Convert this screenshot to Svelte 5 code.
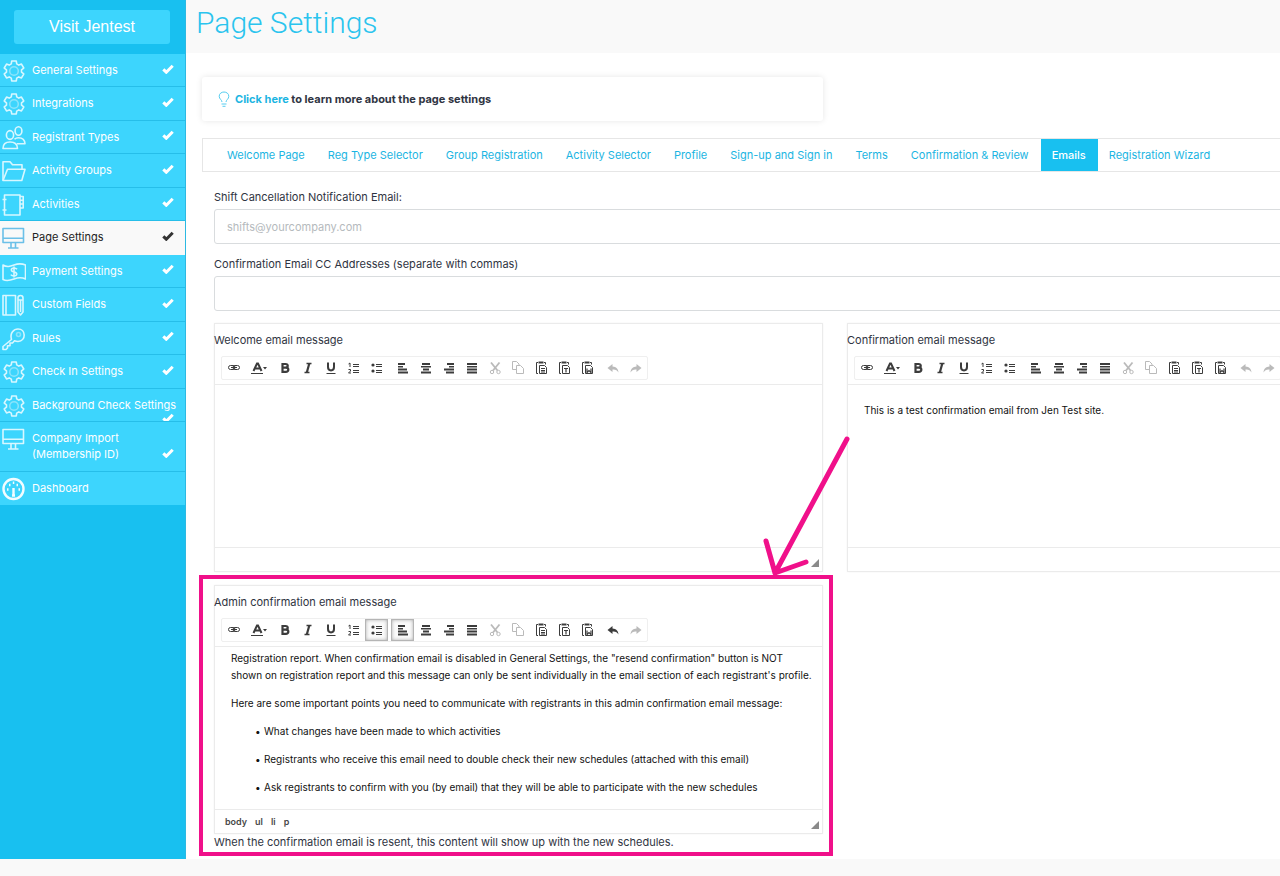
<script>
	const menu = [
		{ label: 'General Settings', icon: 'gear' },
		{ label: 'Integrations', icon: 'gear' },
		{ label: 'Registrant Types', icon: 'users' },
		{ label: 'Activity Groups', icon: 'folder' },
		{ label: 'Activities', icon: 'notebook' },
		{ label: 'Page Settings', icon: 'monitor', active: true },
		{ label: 'Payment Settings', icon: 'money' },
		{ label: 'Custom Fields', icon: 'fields' },
		{ label: 'Rules', icon: 'key' },
		{ label: 'Check In Settings', icon: 'gear' },
		{ label: 'Background Check Settings', icon: 'gear', long: true },
		{ label: 'Company Import (Membership ID)', icon: 'monitor', tall: true },
		{ label: 'Dashboard', icon: 'gauge', unchecked: true }
	];

	const tabs = [
		'Welcome Page',
		'Reg Type Selector',
		'Group Registration',
		'Activity Selector',
		'Profile',
		'Sign-up and Sign in',
		'Terms',
		'Confirmation & Review',
		'Emails',
		'Registration Wizard'
	];
	let tab = $state('Emails');

	const tools = [
		['link', 'color', 'bold', 'italic', 'underline', 'ol', 'ul'],
		['left', 'center', 'right', 'justify', 'cut', 'copy', 'paste', 'pasteText', 'pasteWord'],
		['undo', 'redo']
	];

	// six-toothed outline around 12,12
	function gear() {
		const pts = [];
		for (let k = 0; k < 6; k++) {
			for (const [da, r] of [[-21, 7.6], [-13, 10.2], [13, 10.2], [21, 7.6]]) {
				const a = ((k * 60 - 90 + da) * Math.PI) / 180;
				pts.push(`${(12 + r * Math.cos(a)).toFixed(2)} ${(12 + r * Math.sin(a)).toFixed(2)}`);
			}
		}
		return 'M' + pts.join('L') + 'Z';
	}
	const gearPath = gear();
</script>

{#snippet menuIcon(name)}
	<svg class="icon" viewBox="0 0 24 24" width="24" height="24" aria-hidden="true">
		{#if name === 'gear'}
			<path d={gearPath} />
			<circle class="faint" cx="12" cy="12" r="4.3" />
		{:else if name === 'users'}
			<ellipse cx="8" cy="9" rx="3.6" ry="4.4" />
			<ellipse cx="16.5" cy="5" rx="3.4" ry="4.2" />
			<path d="M1 22.5c0-4.500 2.500-6.500 7-6.500s7.500 2 7.500 6.500Z" />
			<path d="M12.500 13.300c1-1 2.300-1.500 4-1.500 3.700 0 6.200 1.700 6.500 6h-8" />
		{:else if name === 'folder'}
			<path d="M1 21.500V2.800h7l2.500 3h9.500v4.500" />
			<path d="M1 21.500 5.500 10.300h17.500L19.800 21.500Z" />
		{:else if name === 'notebook'}
			<path d="M2.500 2h15.500v20H2.500Z" />
			<path d="M18 3.500h3.200v11.500H18M18 7.300h3.200M18 11h3.200M0.500 6.500h4M0.500 17h4" />
		{:else if name === 'monitor'}
			<path d="M1 2.500h20.500v14H1ZM1 12.300h20.500M9 16.500v5M13.500 16.500v5M6 22h10.500" />
		{:else if name === 'money'}
			<path d="M1 5c4 2.500 7 1.500 11 0s8-1.500 11.500 0v14c-4-2-7.500-1.500-11.500 0s-7 2.500-11 .5Z" />
			<path d="M15 9.200c-.7-1-1.800-1.200-3-1.200-3.500 0-3.500 3.600 0 4s3.800 4 0 4c-1.500 0-2.500-.4-3.200-1.400M12 6.500v11" />
		{:else if name === 'fields'}
			<path d="M1 2.500h12.500v19.500H1ZM4 2.500v19.500M16 5c0-3.300 5-3.300 5 0v14l-2.500 3-2.500-3ZM16 7h5M18.500 7v12" />
		{:else if name === 'key'}
			<path d="M9.500 12.500C7.500 6 12 2 16 2c8 0 8.500 12 0 12.500-1.500 0-2.500-.2-3.500-.7l-2 2.200H8v2.700H5.500V21L4 22.500H1v-3Z" />
			<circle class="faint" cx="16.500" cy="7.500" r="2" />
		{:else}
			<circle class="bold" cx="11.500" cy="12" r="10" />
			<path class="bold" d="M5 12.500h1.500M7 8h1.500M10.800 5.800h1.500M14.500 8h1.500M16.500 12.500h1.500M11.500 11v8M10 18.500h3" />
		{/if}
	</svg>
{/snippet}

{#snippet toolIcon(name)}
	<svg viewBox="0 0 16 16" width="16" height="16" aria-hidden="true">
		{#if name === 'link'}
			<g class="line" stroke-width="1">
				<rect x="2.500" y="5.500" width="6.500" height="4" rx="2" />
				<rect x="7" y="5.500" width="6.500" height="4" rx="2" />
				<path d="M5 7.500h6" />
			</g>
		{:else if name === 'color'}
			<path class="line" stroke-width="2" d="M2.500 11 6 3.500h1L10.500 11M4 8.500h5" />
			<path d="M0 13h12v1H0ZM12 7h4l-2 2.500Z" />
		{:else if name === 'bold'}
			<path class="line" stroke-width="2.200" d="M5.500 4h3c3 0 3 3.600 0 3.600h-3h3.300c3.400 0 3.400 4.300 0 4.300H5.500Z" />
		{:else if name === 'italic'}
			<path class="line" stroke-width="1.500" d="M6.500 3.500h5M4.500 12.500h5" />
			<path class="line" stroke-width="2.200" d="M9.300 3.500 6.800 12.500" />
		{:else if name === 'underline'}
			<path class="line" stroke-width="2" d="M5 2.500v4.500c0 4.500 6 4.500 6 0V2.500" />
			<path d="M3.500 13h9v1h-9Z" />
		{:else if name === 'ol'}
			<path class="line" stroke-width="1" d="M2.500 4 4 3v4M2.500 9.500h2v1.500l-2 2h2.500" />
			<path d="M7 4h6v1H7ZM7 6h6v1H7ZM7 10h6v1H7ZM7 12h6v1H7Z" />
		{:else if name === 'ul'}
			<circle cx="4" cy="5" r="1.600" />
			<circle cx="4" cy="11" r="1.600" />
			<path d="M7 4h6v1H7ZM7 6h6v1H7ZM7 10h6v1H7ZM7 12h6v1H7Z" />
		{:else if name === 'left'}
			<path d="M3 3h7v2H3ZM3 6h5v1.500H3ZM3 8.500h9v2H3ZM3 11.500h10v2H3Z" />
		{:else if name === 'center'}
			<path d="M4 3h8v2H4ZM3 6h10v1.500H3ZM5 8.500h6v2H5ZM3 11.500h10v2H3Z" />
		{:else if name === 'right'}
			<path d="M6 3h7v2H6ZM8 6h5v1.500H8ZM3 8.500h10v2H3ZM5 11.500h8v2H5Z" />
		{:else if name === 'justify'}
			<path d="M3 3h10v2H3ZM3 6h10v1.500H3ZM3 8.500h10v2H3ZM3 11.500h10v2H3Z" />
		{:else if name === 'cut'}
			<path class="line" stroke-width="1.800" d="M4 2.500l6.500 8M12.500 2.500l-6.500 8" />
			<circle class="line" cx="5" cy="12" r="1.700" />
			<circle class="line" cx="11.500" cy="12" r="1.700" />
		{:else if name === 'copy'}
			<path class="line" stroke-width="1" d="M6 9.500H2.500v-8h4l2.500 2.500v1M6.500 5.500h4l3 3v5h-7Z" />
		{:else if name === 'undo'}
			<path d="M7.500 4 2.500 8l5 4V9.500c3-.3 4.700.7 6 3-.3-3.700-2.300-5.900-6-6Z" />
		{:else if name === 'redo'}
			<path d="M8.500 4l5 4-5 4V9.500c-3-.3-4.700.7-6 3 .3-3.700 2.300-5.900 6-6Z" />
		{:else}
			<path class="line" stroke-width="1" d="M5 13.500H3.500v-11H5M11 2.500h1.500v2" />
			<path d="M5.500 1.500h5v2h-5Z" />
			<path class="line" stroke-width="1" d="M6.500 5.500h5l2 2v6h-7Z" />
			{#if name === 'paste'}
				<path class="line" stroke-width="1" d="M8 8.500h4M8 10.500h4M8 12h4" />
			{:else if name === 'pasteText'}
				<path class="line" stroke-width="1.200" d="M8 8.500h4M10 8.500v4" />
			{:else}
				<path class="line" stroke-width="1.200" d="M8 8.500v4l2-2 2 2v-4" />
			{/if}
		{/if}
	</svg>
{/snippet}

{#snippet toolbar(on, off)}
	<div class="toolbar" role="toolbar" aria-label="Formatting">
		{#each tools as group}
			<div class="group">
				{#each group as tool}
					<button
						type="button"
						class="tool {tool}"
						class:on={on.includes(tool)}
						disabled={off.includes(tool)}
						aria-label={tool}
					>
						{@render toolIcon(tool)}
					</button>
				{/each}
			</div>
		{/each}
	</div>
{/snippet}

{#snippet resizer()}
	<svg class="resizer" viewBox="0 0 8 8" width="8" height="8" aria-hidden="true">
		<path d="M8 0v8H0Z" />
	</svg>
{/snippet}

<div class="page">
	<aside>
		<a class="visit" href="#site">Visit Jentest</a>
		<nav>
			{#each menu as item}
				<a
					href="#{item.icon}"
					class="item"
					class:active={item.active}
					class:long={item.long}
					class:tall={item.tall}
				>
					{@render menuIcon(item.icon)}
					<span class="label">{item.label}</span>
					{#if !item.unchecked}
						<svg class="check" viewBox="0 0 12 10" width="12" height="10" aria-hidden="true">
							<path d="M1.300 5.300 4.300 8.200 10.700 1.700" />
						</svg>
					{/if}
				</a>
			{/each}
		</nav>
	</aside>

	<main>
		<header><h1>Page Settings</h1></header>

		<div class="content">
			<div class="info">
				<svg class="bulb" viewBox="0 0 12 16" width="12" height="16" aria-hidden="true">
					<path d="M4 11c0-2-2.800-3-2.800-5.700C1.200-.4 10.800-.4 10.800 5.300 10.800 8 8 9 8 11" />
					<path d="M3.500 13h5M4.500 15.300h3" />
				</svg>
				<p><a href="#help">Click here</a> to learn more about the page settings</p>
			</div>

			<div class="tabs" role="tablist">
				{#each tabs as name}
					<button
						type="button"
						role="tab"
						aria-selected={tab === name}
						class:selected={tab === name}
						onclick={() => (tab = name)}>{name}</button
					>
				{/each}
			</div>

			<form class="panel">
				<label for="shift">Shift Cancellation Notification Email:</label>
				<input id="shift" type="text" placeholder="shifts@yourcompany.com" />
				<label for="cc">Confirmation Email CC Addresses (separate with commas)</label>
				<input id="cc" type="text" />

				<div class="editors">
					<section>
						<div class="editor">
							<h2 id="welcome">Welcome email message</h2>
							{@render toolbar([], ['cut', 'copy', 'undo', 'redo'])}
							<div class="body" contenteditable="true" role="textbox" tabindex="0" aria-labelledby="welcome"></div>
							<div class="foot">{@render resizer()}</div>
						</div>
					</section>

					<section>
						<div class="editor">
							<h2 id="confirmation">Confirmation email message</h2>
							{@render toolbar([], ['cut', 'copy', 'undo', 'redo'])}
							<div class="body single" contenteditable="true" role="textbox" tabindex="0" aria-labelledby="confirmation">
								<p>This is a test confirmation email from Jen Test site.</p>
							</div>
							<div class="foot">{@render resizer()}</div>
						</div>
					</section>

					<section class="marked">
						<div class="editor">
							<h2 id="admin">Admin confirmation email message</h2>
							{@render toolbar(['ul', 'left'], ['cut', 'copy', 'redo'])}
							<div class="body" contenteditable="true" role="textbox" tabindex="0" aria-labelledby="admin">
								<p>
									Registration report. When confirmation email is disabled in General Settings, the "resend confirmation" button is NOT<br />
									shown on registration report and this message can only be sent individually in the email section of each registrant's profile.
								</p>
								<p>Here are some important points you need to communicate with registrants in this admin confirmation email message:</p>
								<ul>
									<li>What changes have been made to which activities</li>
									<li>Registrants who receive this email need to double check their new schedules (attached with this email)</li>
									<li>Ask registrants to confirm with you (by email) that they will be able to participate with the new schedules</li>
								</ul>
							</div>
							<div class="foot">
								<span>body</span><span>ul</span><span>li</span><span>p</span>
								{@render resizer()}
							</div>
						</div>
						<p class="note">When the confirmation email is resent, this content will show up with the new schedules.</p>
						<div class="frame"></div>
						<svg class="arrow" viewBox="0 0 90 144" width="90" height="144" aria-hidden="true">
							<path d="M85 5 13 139M4 107 13 139 44 128" />
						</svg>
					</section>
				</div>
			</form>
		</div>
	</main>
</div>

<style>
	:global(body) {
		background: #f9f9f9;
	}
	.page {
		display: flex;
		font-family: Inter, 'Liberation Sans', Arial, sans-serif;
		font-size: 11px;
		line-height: 16px;
		color: #2f3442;
		margin-bottom: 17px;
	}
	a {
		text-decoration: none;
	}
	h1,
	h2,
	p,
	ul {
		margin: 0;
		font-weight: 400;
	}
	button,
	input {
		font: inherit;
	}

	aside {
		flex: none;
		width: 186px;
		background: #18c0f0;
		border-right: 1px solid #2cb9e2;
		box-sizing: border-box;
	}
	.visit {
		display: block;
		margin: 10px 15px 10px 14px;
		border-radius: 3px;
		background: #3dd5fd;
		color: #fff;
		font-family: 'Liberation Sans', Arial, sans-serif;
		font-size: 16px;
		line-height: 34px;
		text-align: center;
	}
	nav {
		display: flex;
		flex-direction: column;
		min-height: 451px;
	}
	.item {
		flex: 1 0 33px;
		display: grid;
		grid-template-columns: 24px 1fr 12px;
		grid-template-rows: 16px;
		column-gap: 6px;
		align-items: center;
		box-sizing: border-box;
		height: 33px;
		padding: 8px 11px 0 2px;
		overflow: hidden;
		border-bottom: 1px solid #26bee9;
		background: #3dd5fd;
		color: #fff;
	}
	.item.active {
		background: #f9f9f9;
		border-color: #f9f9f9;
		color: #222;
	}
	.item.long .label {
		grid-column: 2 / 4;
		white-space: nowrap;
	}
	.item.long .check {
		grid-column: 3;
		margin: 0;
	}
	.item.tall {
		flex-basis: 49px;
		grid-template-rows: 32px;
	}
	.item.tall .icon {
		align-self: start;
		margin-top: -3px;
	}
	.item.tall .check {
		align-self: end;
		margin-bottom: 4px;
	}
	.item:last-child {
		border-color: #3dd5fd;
	}
	.icon {
		margin-top: 2px;
		fill: none;
		stroke: #d8f7ff;
		stroke-width: 1.6;
		stroke-linejoin: round;
	}
	.active .icon {
		stroke: #6cc0e8;
	}
	.faint {
		stroke: #8be4fb;
	}
	.bold {
		stroke: #f2fcff;
		stroke-width: 2.4;
	}
	.check {
		margin-bottom: 3px;
		fill: none;
		stroke: #fff;
		stroke-width: 3;
	}
	.active .check {
		stroke: #333;
	}

	main {
		flex: 1;
		min-width: 0;
		overflow: hidden;
		background: #fff;
	}
	header {
		height: 53px;
		padding-left: 10px;
		background: #f9f9f9;
	}
	h1 {
		font-family: Roboto, sans-serif;
		font-size: 30px;
		font-weight: 300;
		line-height: 46px;
		color: #2bc4ee;
	}
	/* the form is wider than the viewport and runs off the right edge */
	.content {
		width: calc(100% + 172px);
		padding: 24px 0 9px 16px;
		box-sizing: content-box;
	}
	.info {
		display: flex;
		align-items: center;
		box-sizing: border-box;
		width: calc(50% - 12px);
		height: 44px;
		padding-left: 16px;
		border-radius: 3px;
		box-shadow: 0 0 6px #0000001a;
	}
	.bulb {
		margin-right: 5px;
		fill: none;
		stroke: #55cdf0;
	}
	.info p {
		font-weight: 700;
	}
	.info a {
		color: #1bb5e2;
	}

	.tabs {
		display: flex;
		margin-top: 17px;
		padding-left: 13px;
		border: 1px solid #e6e6e6;
	}
	.tabs button {
		height: 32px;
		padding: 0 12px 0 11px;
		border: 0;
		background: none;
		color: #1bb5e2;
		white-space: nowrap;
	}
	.tabs .selected {
		background: #18c0f0;
		color: #fff;
		font-weight: 500;
	}

	.panel {
		padding: 17px 12px 0;
	}
	label {
		display: block;
		margin-bottom: 4px;
	}
	input {
		display: block;
		box-sizing: border-box;
		width: 100%;
		height: 35px;
		margin-bottom: 12px;
		padding: 0 12px;
		border: 1px solid #d9dcde;
		border-radius: 3px;
		background: #fff;
	}
	input::placeholder {
		color: #b5babd;
	}

	.editors {
		display: grid;
		grid-template-columns: 1fr 1fr;
		gap: 13px 24px;
		align-items: start;
	}
	section {
		min-width: 0;
	}
	.editor {
		border: 1px solid #ebebeb;
		box-shadow: 0 0 2px #0000000d;
	}
	h2 {
		margin: 8px 0 8px -1px;
		font-size: 11px;
		line-height: 16px;
	}
	.toolbar {
		display: flex;
		gap: 3px;
		width: max-content;
		margin: 0 0 4px 6px;
		border: 1px solid #efefef;
		border-radius: 2px;
	}
	.group {
		display: flex;
	}
	.tool {
		display: flex;
		align-items: center;
		justify-content: center;
		box-sizing: border-box;
		width: 23px;
		height: 22px;
		padding: 0;
		border: 0;
		background: none;
	}
	.tool.color {
		width: 28px;
	}
	.tool svg {
		fill: #3c3c3c;
	}
	.tool .line {
		fill: none;
		stroke: #3c3c3c;
	}
	.tool:disabled {
		opacity: 0.35;
	}
	.tool.on {
		background: #fafafa;
		box-shadow: inset 0 0 4px #888;
		outline: 1px solid #b5b5b5;
		outline-offset: -1px;
	}
	.body {
		height: 163px;
		box-sizing: border-box;
		padding: 3px 0 0 16px;
		overflow: hidden;
		border-top: 1px solid #ebebeb;
		outline: 0;
		font-size: 10px;
		line-height: 17px;
		color: #111;
		white-space: nowrap;
	}
	.body.single {
		padding-top: 17px;
	}
	.body p,
	.body li {
		margin-bottom: 11px;
	}
	.body ul {
		padding-left: 24px;
		list-style: none;
	}
	.body li {
		display: flex;
	}
	.body li::before {
		content: '•';
		width: 9px;
	}
	.foot {
		display: flex;
		align-items: center;
		gap: 8px;
		height: 23px;
		padding: 0 3px 0 10px;
		border-top: 1px solid #ebebeb;
		font-size: 9px;
		font-weight: 600;
		color: #484848;
	}
	.resizer {
		margin: 6px 0 0 auto;
		fill: #8a8a8a;
	}
	.note {
		line-height: 16px;
	}

	.marked {
		position: relative;
	}
	.frame {
		position: absolute;
		inset: -10px -10px -6px -15px;
		border: 4px solid #f0108a;
		pointer-events: none;
	}
	.arrow {
		position: absolute;
		top: -151px;
		right: -29px;
		fill: none;
		stroke: #f0108a;
		stroke-width: 5;
		stroke-linecap: round;
		stroke-linejoin: round;
		pointer-events: none;
	}
</style>
